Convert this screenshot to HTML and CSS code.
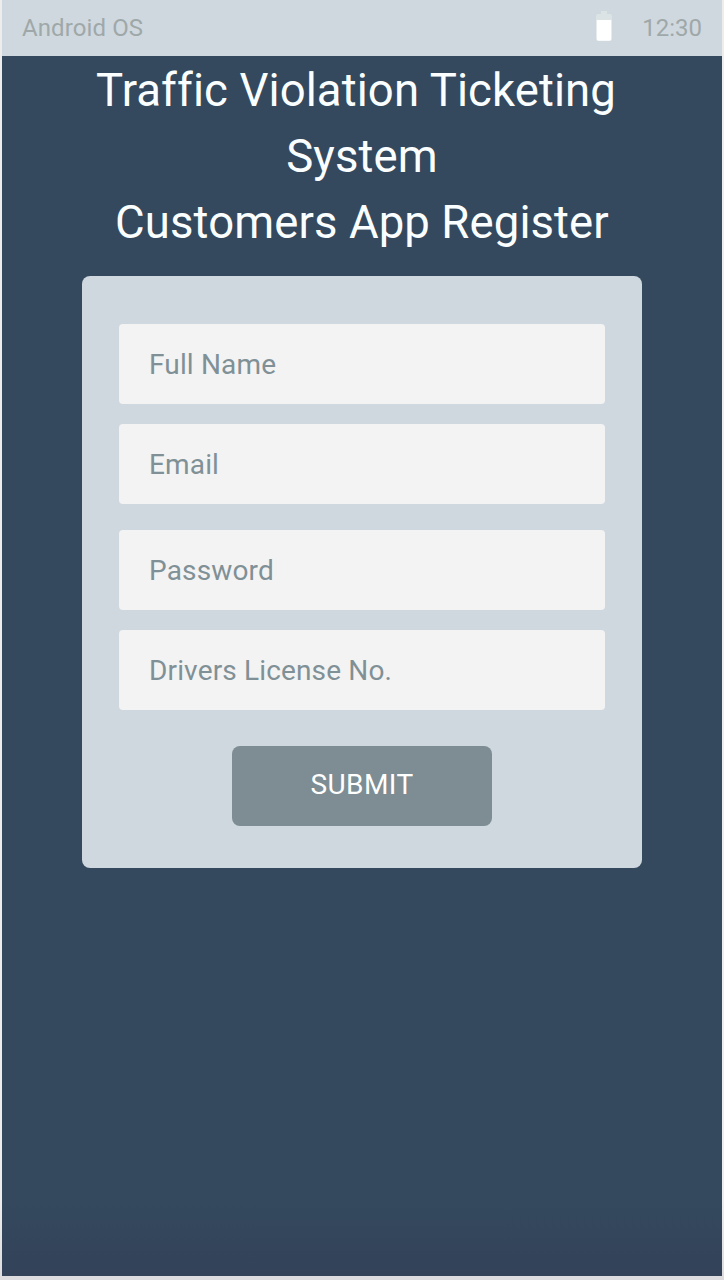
FILE: index.html
```html
<!DOCTYPE html>
<html lang="en">
<head>
<meta charset="utf-8">
<title>Customers App Register</title>
<link rel="stylesheet" href="styles.css">
</head>
<body>
<main class="screen">
  <header class="status-bar">
    <span class="os-name">Android OS</span>
    <svg class="battery" width="16" height="30" viewBox="0 0 16 30"><path fill="#dbe3e4" d="M5 0h6v3h3a2 2 0 0 1 2 2v23a2 2 0 0 1-2 2H2a2 2 0 0 1-2-2V5a2 2 0 0 1 2-2h3z"/><path fill="#fff" d="M.7 9h14.6v19a1.7 1.7 0 0 1-1.7 1.7H2.4A1.7 1.7 0 0 1 .7 28z"/></svg>
    <span class="clock">12:30</span>
  </header>
  <h1 class="title"><span class="line line-first">Traffic Violation Ticketing</span><span class="line">System</span><span class="line">Customers App Register</span></h1>
  <form class="card">
    <div class="field">Full Name</div>
    <div class="field">Email</div>
    <div class="field field-spaced">Password</div>
    <div class="field">Drivers License No.</div>
    <button class="submit" type="button">SUBMIT</button>
  </form>
</main>
</body>
</html>
```
FILE: styles.css
```css
* { box-sizing: border-box; }
html { background: #dfdddf; }
body { margin: 0; height: 1280px; background: linear-gradient(#ededed, #ededed 1200px, #dddbdd 1280px); font-family: Roboto, sans-serif; }
.screen { width: 720px; height: 1276px; margin-left: 2px; background: linear-gradient(#34495e 1200px, #334259 1276px); display: flex; flex-direction: column; align-items: center; }
.status-bar { width: 100%; height: 56px; flex: none; padding: 0 20px; display: flex; align-items: center; background: #cfd8de; color: #9fa8a9; font-size: 24px; }
.os-name { flex: 1; letter-spacing: .1px; }
.battery { margin: 0 30px 4px 0; }
.title { margin: 0; padding-top: 2px; color: #fafeff; font-size: 45.5px; font-weight: 400; line-height: 66px; text-align: center; }
.line { display: block; letter-spacing: .1px; }
.line-first { margin-right: 12px; }
.card { width: 560px; height: 592px; margin-top: 20px; padding: 48px 37px; border-radius: 8px; background: #cfd8de; display: flex; flex-direction: column; align-items: center; }
.field { width: 100%; height: 80px; flex: none; margin-bottom: 20px; padding-left: 30px; border-radius: 4px; background: #f3f3f3; color: #7f9096; font-size: 28px; line-height: 82px; letter-spacing: .15px; }
.field-spaced { margin-top: 6px; }
.submit { width: 260px; height: 80px; flex: none; margin-top: 16px; padding: 0 0 4px; border: 0; border-radius: 8px; background: #7d8d93; color: #fff; font: 28px Roboto, sans-serif; letter-spacing: .4px; }
```
